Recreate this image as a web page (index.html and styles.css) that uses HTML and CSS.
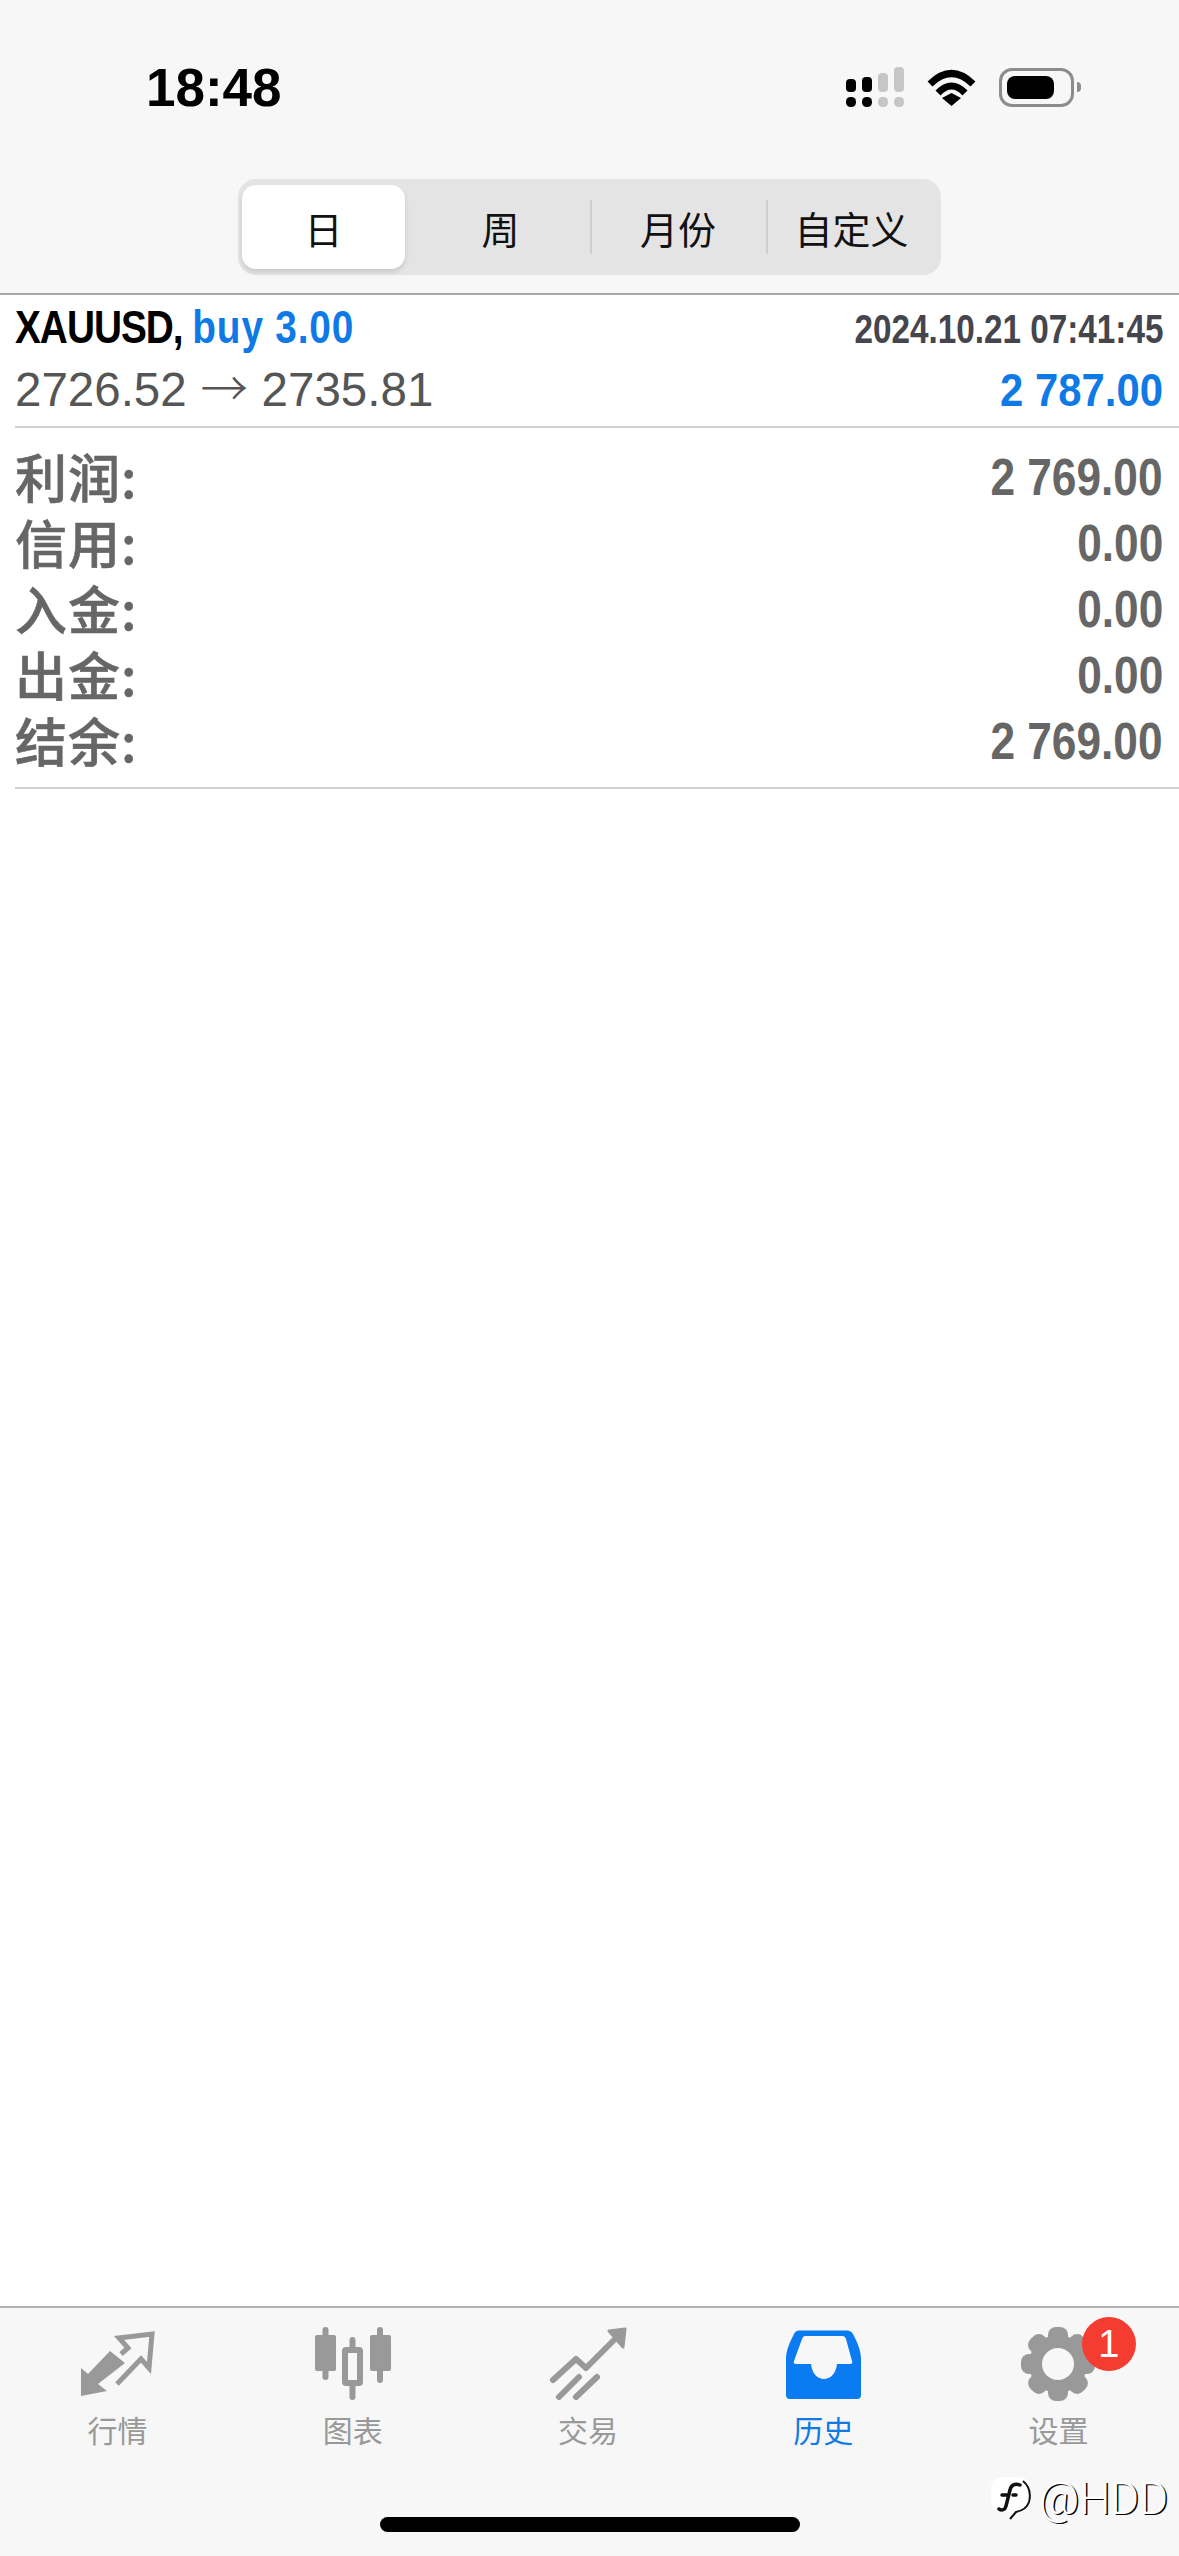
FILE: index.html
```html
<!DOCTYPE html>
<html lang="zh-CN">
<head>
    <meta charset="UTF-8">
    <meta name="viewport" content="width=device-width, initial-scale=1.0">
    <title>历史</title>
    <link rel="stylesheet" href="styles.css">
</head>
<body>
    <div class="screen">
        <!-- top: status bar and period switch -->
        <header class="header">
            <div class="status">
                <span class="time">18:48</span>
                <div class="status-icons">
                    <svg class="signal" width="58" height="40" viewBox="0 0 58 40">
                        <rect class="on" x="0" y="12" width="10" height="13" rx="4"/>
                        <rect class="on" x="16" y="10" width="10" height="15" rx="4"/>
                        <rect class="off" x="32" y="6" width="10" height="19" rx="4"/>
                        <rect class="off" x="48" y="0" width="10" height="25" rx="4"/>
                        <rect class="on" x="0" y="30" width="10" height="10" rx="4.5"/>
                        <rect class="on" x="16" y="30" width="10" height="10" rx="4.5"/>
                        <rect class="off" x="32" y="30" width="10" height="10" rx="4.5"/>
                        <rect class="off" x="48" y="30" width="10" height="10" rx="4.5"/>
                    </svg>
                    <svg class="wifi" width="49" height="37" viewBox="0 0 49 37">
                        <path d="M3 15 Q24.5 -6 46 15"/>
                        <path d="M11 24 Q24.5 10 38 24"/>
                        <polygon points="24.5,37 15,29 24.5,24 34,29"/>
                    </svg>
                    <div class="battery">
                        <div class="battery-body"><div class="battery-level"></div></div>
                        <div class="battery-nub"></div>
                    </div>
                </div>
            </div>
            <div class="segments">
                <div class="segment active">日</div>
                <div class="segment week">周</div>
                <div class="segment divided">月份</div>
                <div class="segment divided">自定义</div>
            </div>
        </header>

        <main class="content">
            <div class="trade">
                <div class="trade-row first">
                    <div class="symbol"><span class="pair">XAUUSD, </span><span class="blue deal">buy 3.00</span></div>
                    <div class="date">2024.10.21 07:41:45</div>
                </div>
                <div class="trade-row second">
                    <div class="prices">2726.52 <span class="arrow">→</span> 2735.81</div>
                    <div class="profit blue">2 787.00</div>
                </div>
            </div>
            <div class="summary">
                <div class="summary-row"><span class="label">利润:</span><span class="value">2 769.00</span></div>
                <div class="summary-row"><span class="label">信用:</span><span class="value">0.00</span></div>
                <div class="summary-row"><span class="label">入金:</span><span class="value">0.00</span></div>
                <div class="summary-row"><span class="label">出金:</span><span class="value">0.00</span></div>
                <div class="summary-row"><span class="label">结余:</span><span class="value">2 769.00</span></div>
            </div>
        </main>

        <!-- bottom tabs -->
        <nav class="tabbar">
            <div class="tab">
                <svg class="icon" width="80" height="80" viewBox="0 0 80 80">
                    <polygon points="32,27 47,39 20,60 29,67 3,72 3,44 10,50"/>
                    <polyline class="line" points="43,30 50,24 41,14 74,10 71,44 63,35 39,60"/>
                </svg>
                <span class="tab-label">行情</span>
            </div>
            <div class="tab">
                <svg class="icon" width="80" height="80" viewBox="0 0 80 80">
                    <rect x="2" y="11" width="21" height="36" rx="2"/>
                    <rect x="9.5" y="3" width="6" height="53" rx="3"/>
                    <rect x="36.5" y="13" width="6" height="63" rx="3"/>
                    <rect class="candle" x="32" y="26" width="15" height="33" rx="1"/>
                    <rect x="57" y="11" width="21" height="36" rx="2"/>
                    <rect x="64" y="3" width="6" height="56" rx="3"/>
                </svg>
                <span class="tab-label">图表</span>
            </div>
            <div class="tab">
                <svg class="icon" width="80" height="80" viewBox="0 0 80 80">
                    <polyline class="line round" points="5,56 28,35 38,44 70,12"/>
                    <polygon class="round-fill" points="61,7 77,5 75,23"/>
                    <line class="line round" x1="11" y1="73" x2="31" y2="53"/>
                    <line class="line round" x1="28" y1="73" x2="49" y2="53"/>
                </svg>
                <span class="tab-label">交易</span>
            </div>
            <div class="tab current">
                <svg class="icon" width="80" height="80" viewBox="0 0 80 80">
                    <path d="M16 6.500 H64 Q68 6.500 70 10 C74 18 78 26 78 35 V71 Q78 75 74 75 H7 Q3 75 3 71 V35 C3 26 7 18 11 10 Q12.500 6.500 16 6.500 Z"/>
                    <path class="tray" d="M22 12 H60 Q62 12 63 15 L69 37 Q70 40 67 40 H54 C53 50 47 55 41 55 C35 55 29 50 28 40 H13 Q10 40 11 37 L19 15 Q20 12 22 12 Z"/>
                </svg>
                <span class="tab-label">历史</span>
            </div>
            <div class="tab">
                <svg class="icon" width="80" height="80" viewBox="0 0 80 80">
                    <circle cx="40" cy="40" r="29"/>
                    <rect x="30" y="3" width="20" height="74" rx="8"/>
                    <rect x="30" y="3" width="20" height="74" rx="8" transform="rotate(45 40 40)"/>
                    <rect x="30" y="3" width="20" height="74" rx="8" transform="rotate(90 40 40)"/>
                    <rect x="30" y="3" width="20" height="74" rx="8" transform="rotate(135 40 40)"/>
                    <circle class="tray" cx="40" cy="40" r="16"/>
                </svg>
                <span class="tab-label">设置</span>
                <span class="badge">1</span>
            </div>
        </nav>

        <div class="home-bar"></div>

        <!-- watermark over the tab bar -->
        <div class="watermark">
            <svg width="42" height="46" viewBox="0 0 42 46">
                <path class="mark-bg" d="M12 1 H28 C36 1 41 6 41 14 V24 C41 31 35 36 27 37 L19 45 L20 36 H12 C5 36 1 31 1 24 V13 C1 6 5 1 12 1 Z"/>
                <path class="mark-edge" d="M33 5 C39 10 41 18 39 26 C37 32 31 35 26 36 L20 43"/>
                <path class="mark-f" d="M30 9 C25 7 21 9 20 14 L16 30 C15 34 12 35 9 33 M12 19 H18 M23 19 H26"/>
            </svg>
            <span class="mark-text">@HDD</span>
        </div>
    </div>
</body>
</html>
```

FILE: styles.css
```css
* {
    box-sizing: border-box;
}
html, body {
    margin: 0;
    padding: 0;
    background: #fff;
}
body {
    font-family: "Liberation Sans", "Noto Sans CJK SC", sans-serif;
}
.screen {
    position: relative;
    width: 1179px;
    height: 2556px;
    display: flex;
    flex-direction: column;
    overflow: hidden;
}

/* header */
.header {
    height: 295px;
    padding-top: 66px;
    background: #f7f7f7;
    border-bottom: 2px solid #a9a9a9;
}
.status {
    display: flex;
    justify-content: space-between;
    align-items: center;
    height: 42px;
    padding: 0 98px 0 146px;
}
.time {
    font-size: 53px;
    font-weight: 700;
    color: #000;
}
.status-icons {
    display: flex;
    align-items: center;
}
.signal .on {
    fill: #000;
}
.signal .off {
    fill: #c6c6c6;
}
.signal {
    margin-right: 23px;
}
.wifi {
    margin-right: 23px;
}
.wifi path {
    fill: none;
    stroke: #000;
    stroke-width: 7;
}
.wifi polygon {
    fill: #000;
}
.battery {
    display: flex;
    align-items: center;
}
.battery-body {
    width: 75px;
    height: 39px;
    padding: 5px;
    border: 3px solid #8c8c8c;
    border-radius: 13px;
}
.battery-level {
    width: 47px;
    height: 100%;
    background: #000;
    border-radius: 8px;
}
.battery-nub {
    width: 4px;
    height: 10px;
    margin-left: 3px;
    background: #8c8c8c;
    border-radius: 0 4px 4px 0;
}

.segments {
    display: grid;
    grid-template-columns: 163px 185px 176px 171px;
    width: 703px;
    height: 96px;
    margin: 71px auto 0;
    padding: 6px 4px;
    background: #e4e4e4;
    border-radius: 18px;
}
.segment {
    display: flex;
    align-items: center;
    justify-content: center;
    position: relative;
    font-family: "Noto Sans CJK SC", sans-serif;
    font-size: 38px;
    color: #111;
}
.segment.week {
    padding-left: 6px;
}
.segment.active {
    background: #fff;
    border-radius: 14px;
    box-shadow: 0 3px 5px rgba(0, 0, 0, 0.12);
}
.segment.divided::before {
    content: "";
    position: absolute;
    left: 0;
    top: 15px;
    bottom: 15px;
    width: 2px;
    background: #cecece;
}

/* trade list */
.content {
    flex: 1;
    background: #fff;
}
.trade {
    height: 133px;
    margin-left: 15px;
    padding-right: 16px;
    border-bottom: 2px solid #cfcfcf;
}
.trade-row {
    display: flex;
    justify-content: space-between;
    align-items: baseline;
}
.trade-row.first {
    height: 67px;
    padding-top: 4px;
}
.trade-row.second {
    height: 60px;
}
.symbol {
    font-size: 47px;
    font-weight: 700;
    color: #000;
    transform: scaleX(0.825);
    transform-origin: left center;
}
.pair {
    letter-spacing: -1.2px;
}
.deal {
    letter-spacing: 1px;
}
.blue {
    color: #0f7ae5;
}
.date {
    font-size: 40px;
    font-weight: 700;
    color: #45454d;
    transform: scaleX(0.832);
    transform-origin: right center;
}
.prices {
    font-size: 47.5px;
    line-height: 54px;
    color: #555;
}
.arrow {
    margin: 0 0.5px;
    font-family: "Noto Sans CJK SC", sans-serif;
    font-weight: 300;
    line-height: 0;
}
.profit {
    font-size: 47px;
    font-weight: 700;
    transform: scaleX(0.89);
    transform-origin: right center;
}

.summary {
    margin-left: 15px;
    padding: 15px 16px 14px 0;
    border-bottom: 2px solid #cfcfcf;
}
.summary-row {
    display: flex;
    justify-content: space-between;
    align-items: center;
    height: 66px;
    color: #666;
}
.label {
    font-family: "Noto Sans CJK SC", sans-serif;
    font-size: 52px;
    font-weight: 500;
    line-height: 60px;
    letter-spacing: 1px;
    color: #666;
    -webkit-text-stroke: 0.6px #666;
}
.value {
    padding-top: 2px;
    font-size: 51px;
    font-weight: 700;
    transform: scaleX(0.867);
    transform-origin: right center;
}

/* tabs */
.tabbar {
    display: grid;
    grid-template-columns: repeat(5, 1fr);
    height: 250px;
    padding: 16px 3px 0 0;
    background: #f7f7f7;
    border-top: 2px solid #b2b2b2;
}
.tab {
    position: relative;
    display: flex;
    flex-direction: column;
    align-items: center;
    color: #999;
}
.icon {
    fill: #999;
}
.icon .line {
    fill: none;
    stroke: #999;
    stroke-width: 5;
}
.icon .round {
    stroke-width: 6;
    stroke-linecap: round;
    stroke-linejoin: round;
}
.icon .round-fill {
    stroke: #999;
    stroke-width: 3;
    stroke-linejoin: round;
}
.icon .candle {
    fill: #f7f7f7;
    stroke: #999;
    stroke-width: 6;
}
.icon .tray {
    fill: #f7f7f7;
}
.tab-label {
    margin-top: 5px;
    font-family: "Noto Sans CJK SC", sans-serif;
    font-size: 30px;
    line-height: 40px;
}
.tab.current {
    color: #0f7ae5;
}
.tab.current .icon {
    fill: #0a7bf0;
}
.badge {
    position: absolute;
    left: 141px;
    top: -7px;
    width: 54px;
    height: 54px;
    border-radius: 50%;
    background: #f43c30;
    color: #fff;
    font-size: 38px;
    line-height: 54px;
    text-align: center;
}

.home-bar {
    position: absolute;
    left: 380px;
    bottom: 24px;
    width: 420px;
    height: 15px;
    background: #000;
    border-radius: 8px;
}

.watermark {
    position: absolute;
    left: 990px;
    top: 2473px;
    display: flex;
    align-items: center;
    gap: 7px;
}
.mark-bg {
    fill: #fff;
}
.mark-edge {
    fill: none;
    stroke: #111;
    stroke-width: 2;
}
.mark-f {
    fill: none;
    stroke: #111;
    stroke-width: 3.5;
    stroke-linecap: round;
}
.mark-text {
    font-family: Roboto, "Liberation Sans", sans-serif;
    font-size: 44px;
    font-weight: 300;
    color: #fff;
    text-shadow: 1.5px 1px 0 #000;
}
```
